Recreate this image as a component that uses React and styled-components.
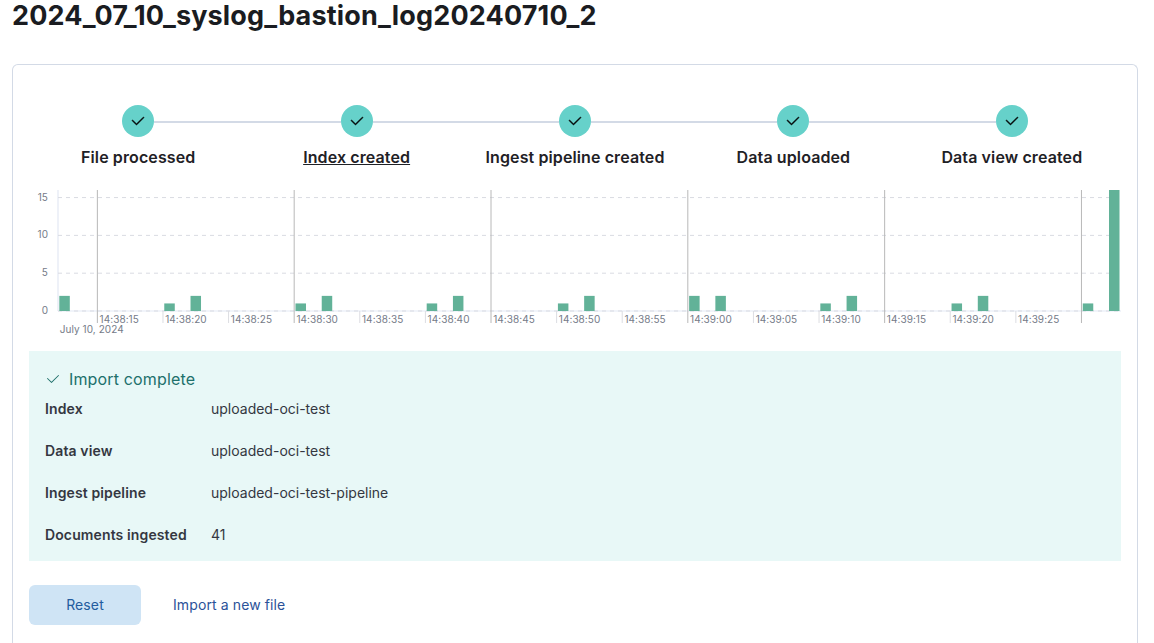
import React from 'react';
import styled, { createGlobalStyle } from 'styled-components';

const GlobalStyle = createGlobalStyle`
  *, *::before, *::after { box-sizing: border-box; }
  html, body { height: 100%; }
  body {
    margin: 0;
    overflow: hidden;
    background: #fff;
    color: #343741;
    font-family: Inter, "Liberation Sans", sans-serif;
    font-size: 14px;
    line-height: 24px;
  }
  #root { height: 100%; }
`;

const Page = styled.main`
  display: flex;
  flex-direction: column;
  padding: 0 16px 0 12px;
  height: 100%;
`;

const Title = styled.h1`
  margin: 0 0 32px;
  height: 32px;
  font-size: 27px;
  font-weight: 700;
  line-height: 32px;
  letter-spacing: 0.155px;
  color: #1a1c21;
  white-space: nowrap;
`;

const Panel = styled.section`
  flex: 1;
  padding: 40px 16px 0;
  border: 1px solid #d3dae6;
  border-bottom: 0;
  border-radius: 6px 6px 0 0;
`;

const Steps = styled.ol`
  display: flex;
  margin: 0;
  padding: 0;
  list-style: none;
`;

const Step = styled.li`
  flex: 1 1 0;
  display: flex;
  flex-direction: column;
  align-items: center;
`;

const StepTrack = styled.div`
  display: flex;
  align-items: center;
  align-self: stretch;
`;

const Connector = styled.span`
  flex: 1;
  height: 2px;
  margin-top: 2px;
  background: ${(p) => (p.$hidden ? 'transparent' : '#d3dae6')};
`;

const StepCircle = styled.span`
  display: flex;
  align-items: center;
  justify-content: center;
  width: 32px;
  height: 32px;
  border-radius: 50%;
  background: #66d1ca;
  color: #000;
`;

const StepTitle = styled.span`
  margin-top: 8px;
  font-size: 16px;
  font-weight: 600;
  line-height: 24px;
  letter-spacing: 0.11px;
  color: #1f2126;
  text-decoration: ${(p) => (p.$underlined ? 'underline' : 'none')};
`;

const Chart = styled.svg`
  display: block;
  width: 1092px;
  height: 160px;
  margin-top: 13px;
`;

const AxisLabel = styled.text`
  font-family: Inter, "Liberation Sans", sans-serif;
  font-size: 10px;
  letter-spacing: 0.06px;
  fill: #757b88;
`;

const Callout = styled.section`
  margin-top: 9px;
  height: 210px;
  padding: 16px;
  background: #e8f8f7;
`;

const CalloutTitle = styled.div`
  display: flex;
  align-items: center;
  gap: 8px;
  height: 24px;
  font-size: 16px;
  letter-spacing: 0.15px;
  color: #20706b;
`;

const Details = styled.dl`
  display: grid;
  grid-template-columns: 166px 1fr;
  row-gap: 18px;
  margin: 6px 0 0;
`;

const Term = styled.dt`
  font-weight: 600;
  letter-spacing: 0.12px;
  color: #343741;
`;

const Description = styled.dd`
  margin: 0;
`;

const Actions = styled.div`
  display: flex;
  gap: 32px;
  margin-top: 24px;
`;

const Button = styled.button`
  height: 40px;
  width: ${(p) => (p.$filled ? '112px' : 'auto')};
  padding: 0;
  border: 0;
  border-radius: 6px;
  background: ${(p) => (p.$filled ? '#cfe4f5' : 'transparent')};
  color: ${(p) => (p.$filled ? '#235c9e' : '#2b5299')};
  font: 400 14px/24px Inter, "Liberation Sans", sans-serif;
  letter-spacing: 0.11px;
`;

const CHECK =
  'M6.5 12a.502.502 0 0 1-.354-.146l-4-4a.502.502 0 0 1 .708-.708L6.5 10.793l6.646-6.647a.502.502 0 0 1 .708.708l-7 7A.502.502 0 0 1 6.5 12';

function CheckIcon({ bold }) {
  return (
    <svg width="16" height="16" viewBox="0 0 16 16" fill="currentColor"
      stroke={bold ? 'currentColor' : 'none'} strokeWidth="0.5">
      <path d={CHECK} />
    </svg>
  );
}

const STEPS = ['File processed', 'Index created', 'Ingest pipeline created', 'Data uploaded', 'Data view created'];

const DETAILS = [
  ['Index', 'uploaded-oci-test'],
  ['Data view', 'uploaded-oci-test'],
  ['Ingest pipeline', 'uploaded-oci-test-pipeline'],
  ['Documents ingested', '41'],
];

// [seconds after 14:38:00, document count]
const BARS = [
  [12, 2], [20, 1], [22, 2], [30, 1], [32, 2], [40, 1], [42, 2], [50, 1], [52, 2],
  [60, 2], [62, 2], [70, 1], [72, 2], [80, 1], [82, 2], [90, 1], [92, 16],
];

const TICKS = Array.from({ length: 16 }, (_, i) => 15 + i * 5);
const LEFT = 29;
const BASE = 129;
const SECOND = 13.1213;
const UNIT = 7.5625;
const xAt = (s) => LEFT + (s - 12) * SECOND;
const yAt = (n) => BASE - n * UNIT;
const clock = (s) => `14:${38 + Math.floor(s / 60)}:${String(s % 60).padStart(2, '0')}`;

function Histogram() {
  return (
    <Chart viewBox="0 0 1092 160">
      <line x1={LEFT} x2={LEFT} y1="8" y2={BASE} stroke="#eef1f8" strokeWidth="2" />
      <line x1={LEFT} x2="1092" y1={BASE} y2={BASE} stroke="#f1f4fa" strokeWidth="2" />
      {[0, 5, 10, 15].map((n) => (
        <g key={n}>
          <line x1={LEFT} x2="1092" y1={yAt(n)} y2={yAt(n)} stroke="#d9dbe2" strokeDasharray="4 4" />
          <AxisLabel x="19" y={yAt(n) + 3} textAnchor="end">{n}</AxisLabel>
        </g>
      ))}
      {TICKS.map((s) => {
        const major = s % 15 === 0;
        return (
          <g key={s}>
            <line x1={xAt(s)} x2={xAt(s)} y1={major ? 8 : BASE} y2="141"
              stroke={major ? '#b8b8b8' : '#dcdde2'} />
            {s < 90 && <AxisLabel x={xAt(s) + 2.2} y="141">{clock(s)}</AxisLabel>}
          </g>
        );
      })}
      {BARS.map(([s, n]) => (
        <rect key={s} x={xAt(s) + 1.3} y={yAt(n)} width="10.5" height={n * UNIT} fill="#62b298" />
      ))}
      <AxisLabel x="30.8" y="151">July 10, 2024</AxisLabel>
    </Chart>
  );
}

export default function App() {
  return (
    <>
      <GlobalStyle />
      <Page>
        <Title>2024_07_10_syslog_bastion_log20240710_2</Title>
        <Panel>
          <Steps>
            {STEPS.map((label, i) => (
              <Step key={label}>
                <StepTrack>
                  <Connector $hidden={i === 0} />
                  <StepCircle><CheckIcon bold /></StepCircle>
                  <Connector $hidden={i === STEPS.length - 1} />
                </StepTrack>
                <StepTitle $underlined={i === 1}>{label}</StepTitle>
              </Step>
            ))}
          </Steps>
          <Histogram />
          <Callout>
            <CalloutTitle><CheckIcon />Import complete</CalloutTitle>
            <Details>
              {DETAILS.map(([term, value]) => (
                <React.Fragment key={term}>
                  <Term>{term}</Term>
                  <Description>{value}</Description>
                </React.Fragment>
              ))}
            </Details>
          </Callout>
          <Actions>
            <Button $filled>Reset</Button>
            <Button>Import a new file</Button>
          </Actions>
        </Panel>
      </Page>
    </>
  );
}
